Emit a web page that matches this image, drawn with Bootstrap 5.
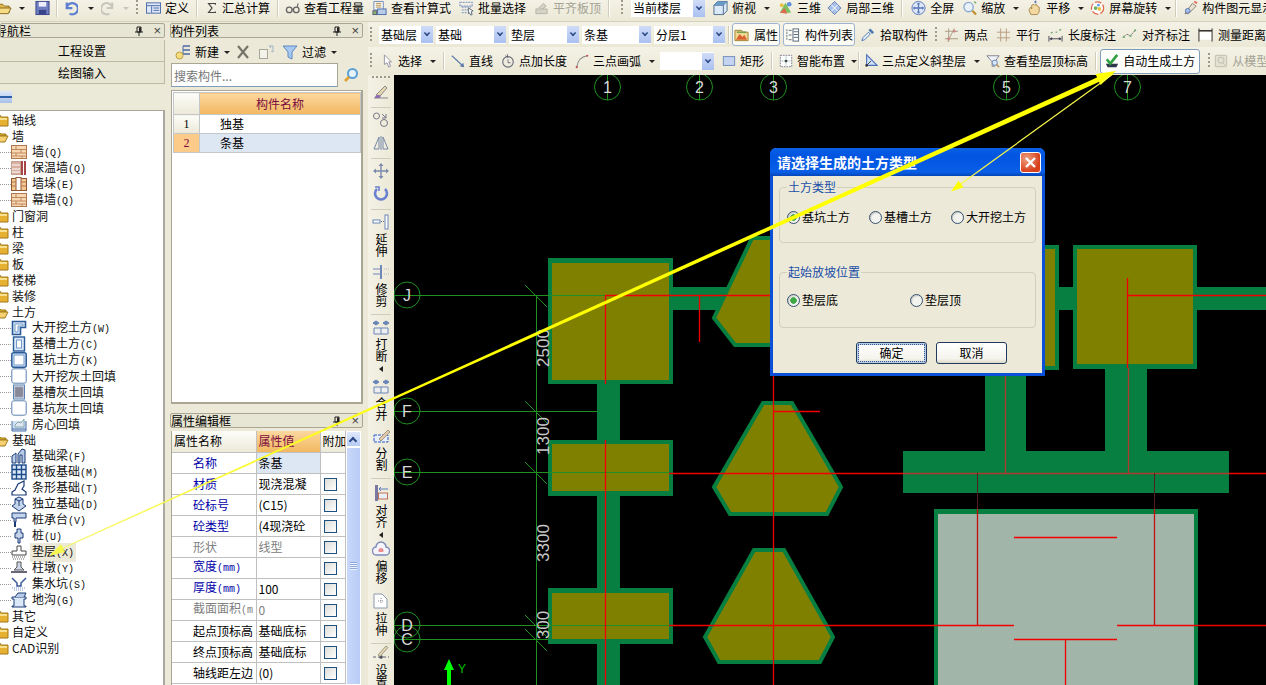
<!DOCTYPE html>
<html lang="zh-CN">
<head>
<meta charset="UTF-8">
<meta name="viewport" content="width=device-width, initial-scale=1.0">
<title>绘图输入</title>
<link href="https://cdn.jsdelivr.net/npm/bootstrap@5.3.2/dist/css/bootstrap.min.css" rel="stylesheet">
<style>
html,body{height:100%;margin:0;overflow:hidden}
body{background:#ece9d8;color:#000;font:12px/16px "Noto Sans CJK SC","Liberation Sans",sans-serif}
.app{width:1266px;height:685px;position:relative;overflow:hidden}
.ic{width:16px;height:16px;flex:none;display:block}
.lat{font:10px/16px "Liberation Mono",monospace;letter-spacing:0}
/* small nudges between toolbar items */
.n1{margin-left:-1px}.n2{margin-left:-2px}.n3{margin-left:-3px}.n4{margin-left:-4px}.n5{margin-left:-5px}.n7{margin-left:-7px}
.m2{margin-left:2px}.m3{margin-left:3px}.m5{margin-left:5px}
/* toolbars */
.tbar{flex:none;background:linear-gradient(#f4f2e6,#ebe8d6);white-space:nowrap;overflow:hidden}
.tb1{height:22px;gap:8px;border-bottom:1px solid #d5d2bf;padding-bottom:5px}
.tb1 .ic{width:15px}
.tb1 .ic.sig{width:12px}
.lft{display:flex;align-items:center;gap:7px;flex:none;margin-left:-3px}
.tb2{height:25px;gap:3px;padding-left:2px}
.tb2 .ic{width:15px}
.tb2 .ti{gap:5px}
.tb3{height:28px;gap:8px;padding-left:2px}
.tb3 .ic{width:14px}
.ti{display:flex;align-items:center;gap:4px;flex:none}
.off{color:#a3a294}
.vs{width:1px;height:18px;background:#cfccb8;flex:none;box-shadow:1px 0 0 #fff;margin-right:-1px;margin-left:-1px}
.vs.n4{margin-left:-4px}.vs.n7{margin-left:-7px}
.tb2 .vs{margin:0}
.grip{width:2px;height:16px;flex:none;background:repeating-linear-gradient(#9c9a88 0 2px,transparent 2px 4px)}
.car{width:0;height:0;border:3px solid transparent;border-top:3px solid #222;border-bottom:0;flex:none}
.car.dim{border-top-color:#c6c6bc}
.combo{display:flex;align-items:center;justify-content:space-between;background:#fff;height:18px;padding-left:2px;flex:none}
.c54{width:54px}.c69{width:69px}.c70{width:70px}.c71{width:71px}.c74{width:74px}
.cbtn{width:12px;height:17px;background:linear-gradient(#d0dcf8,#a9c0f0);display:flex;align-items:center;justify-content:center;flex:none}
.cbtn::after{content:"";width:6px;height:6px;border-right:2px solid #2d4a86;border-bottom:2px solid #2d4a86;transform:rotate(45deg) scale(.75);margin-top:-3px}
.push{height:23px;padding:0 1px;border:1px solid #9db3cf;border-radius:3px;background:#fbfaf3}
.hot{height:25px;padding:0 4px 0 4px;border:1px solid #7f9db9;border-radius:3px;background:#fdfdfa}
/* docks */
.navdock{width:165px;flex:none;display:flex;flex-direction:column;padding-top:1px;min-height:0}
.listdock{width:197px;margin-left:3px;flex:none;display:flex;flex-direction:column;padding-top:1px;min-height:0}
.dtitle{height:15px;flex:none;border:1px solid #a9a793;border-radius:2px;background:#e7e5d3;display:flex;align-items:center;justify-content:space-between;padding-right:3px;line-height:13px;overflow:hidden}
.listdock .dtitle{margin:0 2px}
.cut{margin-left:-6px}
.dbtns{display:flex;align-items:center;gap:9px;flex:none}
.dbtns .x{font:13px/12px "Liberation Sans",sans-serif;color:#444}
.navbtn{display:block;width:100%;height:22px;padding:0;font-size:12px;line-height:18px;border:1px solid #bdbba6;border-width:0 1px 1px 0;border-radius:0;background:#e8e6d5;color:#000;margin-bottom:0}
.navtop{height:2px;flex:none}
.treetool{height:27px;flex:none;background:#ebe9d8;display:flex;align-items:center;border-bottom:1px solid #aca899}
.minus{width:12px;height:12px;background:linear-gradient(#dfe8f8,#a8c0e8);display:flex;align-items:center}
.minus::after{content:"";width:100%;height:2px;background:#2f5fa8}
.tree{flex:1 1 0;background:#fff;border:1px solid #a9a9a0;border-width:0 2px 0 0;padding-top:1px;overflow:hidden}
.nd{height:16px;display:flex;align-items:center;white-space:nowrap;color:#111}
.nd.top{padding-left:0;gap:3px}
.nd.top .ic{margin-left:-7px}
.nd.sub{padding-left:11px;gap:5px;background:repeating-linear-gradient(90deg,#999 0 1px,transparent 1px 2px) 0 8px/12px 1px no-repeat}
.pick{background:#ece9d8;padding:0 2px;margin-left:-2px}
.listtool{height:25px;flex:none;display:flex;align-items:center;gap:5px;padding:3px 0 0 7px}
.srch{height:25px;flex:none;display:flex;gap:5px;padding-left:3px}
.srchbox{width:167px;height:24px;padding:0 2px;background:#fff;border:1px solid #a9a793;border-bottom-color:#7f9db9;border-radius:0;font-size:12px;color:#777;line-height:20px;box-shadow:none}
.srchbox::placeholder{color:#777}
.gridbox{height:314px;flex:none;margin:2px 2px 0 3px;background:#fff;border:1px solid #a9a793;border-width:1px 2px 2px 1px;padding:1px 0 0 1px;overflow:hidden}
.cg{border-collapse:collapse;width:188px;table-layout:fixed}
.cg td,.cg th{height:19px;padding:0;border:1px solid #c3c7c9;font-weight:400;line-height:16px}
.cg .rn{width:26px;background:linear-gradient(#fdfdf9,#ece9d8);text-align:center;font-family:"Liberation Serif",serif}
.cg th{height:22px;text-align:center;color:#7b0b3e}
.cg th.ora{background:linear-gradient(#fbd79f,#f2b860)}
.cg .nm{padding-left:20px}
.cg .act .rn{background:#fccb8a;color:#7b0b3e}
.cg .act .nm{background:#dde7f4}
.gapbar{height:9px;flex:none}
.propbox{flex:1 1 0;margin:3px 4px 0 3px;background:#fff;overflow:hidden;display:flex;border-left:1px solid #a9a793}
.pt{border-collapse:collapse;table-layout:fixed;width:173px;flex:none;align-self:flex-start}
.pt .c1{width:84px}.pt .c2{width:64px}.pt .c3{width:25px}
.pt td,.pt th{height:21px;padding:0;border:1px solid #c0c0c0;border-width:0 1px 1px 0;font-weight:400;white-space:nowrap;overflow:hidden;line-height:16px;vertical-align:middle}
.pt th{background:linear-gradient(#fdfdf9,#ece9d8);padding-left:2px}
.pt th.ora{background:linear-gradient(#fbd79f,#f2b860);color:#7b0b3e}
.pt .k{padding-left:21px}
.pt .b{color:#0000a8}
.pt .g{color:#808080}
.pt .v{padding-left:2px}
.pt .sel{background:#dde7f4}
.cbx{width:13px;height:13px;display:block;margin:2px 0 0 3px;border:1px solid #1c5180;background:linear-gradient(135deg,#dcdcd7,#fff)}
.sbar{width:15px;flex:none;background:#e7eefd;display:flex;flex-direction:column}
.sup{height:16px;background:linear-gradient(#e0e9fc,#b6cbf6);display:flex;align-items:center;justify-content:center;border:1px solid #fff}
.sup::after{content:"";width:6px;height:6px;border-left:2px solid #2d4a86;border-top:2px solid #2d4a86;transform:rotate(45deg);margin-top:4px}
.sthumb{flex:1;background:linear-gradient(90deg,#c9d8fa,#b9ccf6);border:1px solid #fff;display:flex;align-items:center;justify-content:center}
.sthumb::after{content:"";width:7px;height:8px;background:repeating-linear-gradient(#8fa9e0 0 1px,#eef3fe 1px 2px)}
/* left vertical bar */
.main{margin-left:3px;min-width:0;flex:1 1 0;display:flex;flex-direction:column}
.vbar{width:26px;flex:none;background:linear-gradient(90deg,#f4f2e6,#ebe8d6);display:flex;flex-direction:column;align-items:center;overflow:hidden}
.vbar .ic{width:18px}
.vgrip{width:18px;height:2px;flex:none;margin:1px 0 6px;background:repeating-linear-gradient(90deg,#9c9a88 0 2px,transparent 2px 4px)}
.vi{margin-bottom:7px}
.vtxt{writing-mode:vertical-rl;text-orientation:upright;height:24px;line-height:12px;font-size:12px;margin:3px 0 7px;flex:none}
.vtxt.more{margin-bottom:9px}
.vs2{width:20px;height:1px;background:#cfccb8;flex:none;margin-bottom:4px}
.vs2.wide{margin-bottom:6px}
.vs2.tight{margin-bottom:1px}
.vcar{width:0;height:0;border:3px solid transparent;border-right:4px solid #222;border-left:0;margin:-3px 0 3px;flex:none}
.vcar.long{margin-bottom:6px}
.cad{display:block;background:#000;width:872px;height:610px;flex:none}
/* dialog */
.dlg{position:absolute;left:770px;top:148px;width:275px;height:228px;background:#ece9d8;border:3px solid #0a50d8;border-top:0;border-radius:6px 6px 0 0}
.dlgcap{height:28px;margin:0 -3px;padding:0 4px 0 7px;background:linear-gradient(#0a60e6,#0054e0 30%,#0a5fe8 85%,#0546b8);border-radius:6px 6px 0 0;color:#fff;font-weight:700;display:flex;align-items:center;justify-content:space-between;font-size:14px}
.dlgx{width:21px;height:21px;border:1px solid #fff;border-radius:3px;background:radial-gradient(circle at 30% 30%,#f0a080,#d8401c 70%);display:flex;align-items:center;justify-content:center}
.dlgbody{padding:4px 6px 0}
.grp{margin:0;border:1px solid #d0d0bf;border-radius:4px;height:63px;padding:0 0 0 7px}
.grp+.grp{margin-top:22px}
.grp legend{float:none;width:auto;margin:0;padding:0 1px;font-size:12px;line-height:14px;color:#1a4ea8}
.rrow{display:flex;gap:19px;margin-top:15px}
.rrow.two{gap:72px;margin-top:13px}
.rd{display:flex;align-items:center;gap:2px;flex:none}
.dlgr{width:13px;height:13px;margin:0;border:1px solid #34506f;background-color:#f2f2ee;box-shadow:inset 1px 1px 1px #c8c8c0;flex:none}
.dlgr:checked{background-color:#f2f2ee;border-color:#34506f;background-image:radial-gradient(circle,#3fa94a 0 3px,transparent 3.5px)}
.dlgact{display:flex;justify-content:flex-end;gap:9px;margin-top:14px;padding-right:29px}
.dlgbtn{height:22px;width:71px;padding:0;font-size:12px;line-height:18px;border:1px solid #1f3a5c;border-radius:3px;background:linear-gradient(#fff,#f4f3ec 80%,#dcd8c8);color:#000}
.dlgbtn.def{outline:1px dotted #3a5a90;outline-offset:-3px;box-shadow:inset 0 0 0 2px #b8cdea}
.overlay{position:absolute;left:0;top:0;width:1266px;height:685px;pointer-events:none}
</style>
</head>
<body>

<!-- icon set -->
<svg class="d-none">
<symbol id="i-open" viewBox="0 0 16 16"><path d="M1 4h5l2 2h5v7H1z" fill="#e3b94c" stroke="#8a6a20"/><path d="M3 8h12l-3 6H1z" fill="#f6dc84" stroke="#8a6a20"/></symbol>
<symbol id="i-save" viewBox="0 0 16 16"><rect x="1" y="1" width="14" height="14" fill="#6f7fc0" stroke="#39438a"/><rect x="4" y="1.5" width="8" height="5" fill="#eef"/><rect x="4" y="10" width="8" height="5" fill="#39438a"/></symbol>
<symbol id="i-undo" viewBox="0 0 16 16"><path d="M4 2v6h6M4 8a6 6 0 1 1 3 6" fill="none" stroke="#5f7fd0" stroke-width="2.4"/></symbol>
<symbol id="i-redo" viewBox="0 0 16 16"><path d="M12 2v6H6M12 8a6 6 0 1 0-3 6" fill="none" stroke="#c6c6bc" stroke-width="2.2"/></symbol>
<symbol id="i-def" viewBox="0 0 16 16"><rect x=".5" y="2.5" width="15" height="11" fill="#dfe7f8" stroke="#4a6aa8"/><path d="M1 5.500h14M6 6v7M8 8h6M8 10.500h6" stroke="#4a6aa8"/></symbol>
<symbol id="i-sig" viewBox="0 0 16 16"><path d="M12.500 3.500V2h-9l4.500 6-4.500 6h9v-1.500" fill="none" stroke="#444" stroke-width="1.600"/></symbol>
<symbol id="i-glass" viewBox="0 0 16 16"><circle cx="4.500" cy="10" r="3" fill="none" stroke="#666" stroke-width="1.400"/><circle cx="12" cy="10" r="3" fill="none" stroke="#666" stroke-width="1.400"/><path d="M7.500 9.500h1.500M13 7l1-4" stroke="#666" stroke-width="1.200"/></symbol>
<symbol id="i-calc" viewBox="0 0 16 16"><path d="M2 1h10v9H2z" fill="#fff" stroke="#6a86b8"/><path d="M4 3h6M4 5h6M4 7h6" stroke="#b08a40"/><rect x="6" y="9" width="9" height="6" fill="#b8cbe8" stroke="#4a6aa8"/><rect x="1" y="11" width="4" height="4" fill="#8ab86a" stroke="#557"/></symbol>
<symbol id="i-batch" viewBox="0 0 16 16"><path d="M1 2h13v4H1zM3 7h10M3 10h7M3 13h5" fill="none" stroke="#8aa0c8" stroke-width="1.400" stroke-dasharray="2 1"/><path d="M10 8l5 3-2 1 1 3-1.500.5L11 13l-1 1z" fill="#fff" stroke="#567"/></symbol>
<symbol id="i-flush" viewBox="0 0 16 16"><path d="M2 14h12v-5H2zM5 8l5-5 3 3-5 4" fill="#d5d3c6" stroke="#b5b3a6"/></symbol>
<symbol id="i-cube" viewBox="0 0 16 16"><path d="M1 5l4-4h10v10l-4 4H1z" fill="#dce9f8" stroke="#4a6a8a"/><path d="M1 5h10v10M11 5l4-4" fill="none" stroke="#4a6a8a"/><path d="M5 1h10l-4 4H1z" fill="#6a9ac8"/></symbol>
<symbol id="i-3d" viewBox="0 0 16 16"><path d="M2 13l6-11 6 11z" fill="#7cc060"/><path d="M2 13l5-5 3 6z" fill="#e06a50"/><circle cx="12" cy="4" r="2.500" fill="#6090e0"/><circle cx="4" cy="5" r="2" fill="#e8c040"/></symbol>
<symbol id="i-l3d" viewBox="0 0 16 16"><path d="M8 1l7 7-7 7-7-7z" fill="#a8c0e8" stroke="#6480b0"/><path d="M4.500 4.500l7 7M11.500 4.500l-7 7" stroke="#fff"/></symbol>
<symbol id="i-full" viewBox="0 0 16 16"><circle cx="8" cy="8" r="7" fill="#dfe8f8" stroke="#5a78b8"/><path d="M8 3v10M3 8h10" stroke="#5a78b8" stroke-width="1.400"/><path d="M8 2l2 2H6zM8 14l2-2H6zM2 8l2-2v4zM14 8l-2-2v4z" fill="#5a78b8"/></symbol>
<symbol id="i-zoom" viewBox="0 0 16 16"><circle cx="7" cy="7" r="5" fill="#e8f0fa" stroke="#8aa8d0" stroke-width="1.400"/><path d="M11 11l4 4" stroke="#c09030" stroke-width="2.400"/><path d="M13 1l2 2" stroke="#7a7" stroke-width="1.500"/></symbol>
<symbol id="i-pan" viewBox="0 0 16 16"><path d="M4 15l-2-5 2-3 1 2V5l2-1 1 1 2-1 1 2 2 1v5l-2 3z" fill="#f0d8a0" stroke="#a88850"/><path d="M9 0v3M7.500 1.500h3" stroke="#5a78b8"/></symbol>
<symbol id="i-rot" viewBox="0 0 16 16"><circle cx="8" cy="8" r="6.500" fill="#fff" stroke="#e06a50" stroke-width="1.400" stroke-dasharray="7 2"/><circle cx="6" cy="8" r="2" fill="#70b060"/><circle cx="10" cy="9" r="2" fill="#e8c040"/><circle cx="9" cy="5" r="1.500" fill="#60a0e0"/></symbol>
<symbol id="i-disp" viewBox="0 0 16 16"><path d="M2 14L10 3l4 3-8 8z" fill="#e8e0d0" stroke="#8a8070"/><circle cx="5" cy="11" r="2.500" fill="#a8c0e8" stroke="#5a78b8"/><path d="M12 1l3 2" stroke="#e06a50" stroke-width="2"/></symbol>
<symbol id="i-prop" viewBox="0 0 16 16"><path d="M1 3h7l2 2h5v9H1z" fill="#f0d890" stroke="#a08030"/><path d="M2 13l4-6 3 3 2-2 3 5z" fill="#d86030"/><path d="M3 5h10" stroke="#6a9a50" stroke-width="1.500"/></symbol>
<symbol id="i-list" viewBox="0 0 16 16"><path d="M2 2v12" stroke="#567" stroke-dasharray="2 1" fill="none"/><path d="M4 3h3M4 8h3M4 13h3" stroke="#567" fill="none"/><rect x="8.500" y="1.500" width="6" height="13" fill="#fff" stroke="#567"/><path d="M9 4.500h5M9 7.500h5M9 10.500h5" stroke="#567"/></symbol>
<symbol id="i-drop" viewBox="0 0 16 16"><path d="M2 14l1-3 6-6 2 2-6 6z" fill="#e8f0fa" stroke="#4a78b0"/><path d="M9 3l2-2 4 4-2 2z" fill="#4a78b0"/></symbol>
<symbol id="i-2pt" viewBox="0 0 16 16"><path d="M1 4h14M1 12h14M5 1v14M11 1L4 15" stroke="#a89a80" fill="none"/><circle cx="5" cy="12" r="1.500" fill="#c88"/><circle cx="11" cy="4" r="1.500" fill="#c88"/></symbol>
<symbol id="i-par" viewBox="0 0 16 16"><path d="M1 5h14M1 11h14M5 1v14M11 1v14" stroke="#b89a80" fill="none"/></symbol>
<symbol id="i-len" viewBox="0 0 16 16"><path d="M1 9v6M15 9v6M2 12h12M2 12l2-1v2zM14 12l-2-1v2z" stroke="#445" fill="#445"/><path d="M3 6l2-1M8 5h2M12 3l2-1" stroke="#7a7" stroke-width="1.400"/></symbol>
<symbol id="i-ali" viewBox="0 0 16 16"><path d="M1 11l4-4 4 2 5-6" fill="none" stroke="#6a6a6a" stroke-dasharray="2 1"/><circle cx="2" cy="10" r="1.200" fill="#7a7"/><circle cx="9" cy="9" r="1.200" fill="#7a7"/><circle cx="14" cy="3" r="1.200" fill="#7a7"/></symbol>
<symbol id="i-mea" viewBox="0 0 16 16"><path d="M1 1v14M15 1v14" stroke="#222"/><path d="M1 3.500h14" stroke="#222" stroke-width="1.500"/><rect x="2" y="5" width="12" height="8" fill="#fff"/></symbol>
<symbol id="i-ptr" viewBox="0 0 16 16"><path d="M5 1v11l3-2 2 5 2-1-2-5h3z" fill="#fff" stroke="#8a8a9a"/></symbol>
<symbol id="i-line" viewBox="0 0 16 16"><path d="M1 2l13 12" stroke="#5a78a8" stroke-width="1.200"/><path d="M15 15l-5-1 4-4z" fill="#5a78a8"/></symbol>
<symbol id="i-ptl" viewBox="0 0 16 16"><circle cx="8" cy="9" r="6" fill="none" stroke="#667" stroke-width="1.200"/><path d="M5 2l3 2-1-4M8 6v4h3" fill="none" stroke="#667"/></symbol>
<symbol id="i-arc" viewBox="0 0 16 16"><path d="M2 15C3 8 7 3 14 2" fill="none" stroke="#888" stroke-width="1.200"/><circle cx="14" cy="2" r="1.200" fill="#c05050"/><circle cx="2" cy="15" r="1.200" fill="#c05050"/></symbol>
<symbol id="i-rect" viewBox="0 0 16 16"><rect x="1.500" y="3" width="13" height="10" fill="#c4d4f0" stroke="#6a86b8"/></symbol>
<symbol id="i-smart" viewBox="0 0 16 16"><rect x="1.500" y="1.500" width="13" height="13" fill="#fff" stroke="#778" stroke-dasharray="2 1"/><path d="M8 3v10M3 8h10" stroke="#7a9" stroke-dasharray="2 1"/><circle cx="8" cy="8" r="1.500" fill="#445"/></symbol>
<symbol id="i-slope" viewBox="0 0 16 16"><path d="M3 1v12h12z" fill="#cfe0f8" stroke="#4a70b8" stroke-width="1.200"/><path d="M3 13l5-5" stroke="#333"/><circle cx="3" cy="13" r="1.500" fill="#333"/></symbol>
<symbol id="i-look" viewBox="0 0 16 16"><path d="M1 2h14l-5 7v5H7V9z" fill="#eef2f8" stroke="#778"/><circle cx="10" cy="10" r="3" fill="#d8e8f8" stroke="#5a78a8"/><path d="M12 12l3 3" stroke="#a88850" stroke-width="1.600"/></symbol>
<symbol id="i-auto" viewBox="0 0 16 16"><path d="M1 11h14l-2 4H3z" fill="#30364a"/><path d="M2 6l4 5 8-10" fill="none" stroke="#30a040" stroke-width="3"/></symbol>
<symbol id="i-from" viewBox="0 0 16 16"><rect x="1.500" y="1.500" width="13" height="13" rx="1" fill="#e3e1d2" stroke="#bdbba9"/><circle cx="8" cy="7" r="3.500" fill="none" stroke="#bdbba9"/><path d="M10 10l3 3" stroke="#bdbba9"/></symbol>
<symbol id="i-new" viewBox="0 0 16 16"><path d="M8 2h7M8 6h7M8 10h7" stroke="#4a6aa8" stroke-width="1.400"/><path d="M8 2v8" stroke="#4a6aa8"/><circle cx="4.500" cy="11.500" r="3.500" fill="#f4dc80" stroke="#c0a040"/></symbol>
<symbol id="i-del" viewBox="0 0 16 16"><path d="M3 2l10 12M13 2L3 14" stroke="#75746a" stroke-width="2.200"/></symbol>
<symbol id="i-copy" viewBox="0 0 16 16"><rect x="1.500" y="5.500" width="8" height="9" fill="#f4f3ea" stroke="#a8a89a"/><path d="M11 2h4v6M11 2l2 2M15 8l-2-1" fill="none" stroke="#a0b4c8"/></symbol>
<symbol id="i-fun" viewBox="0 0 16 16"><path d="M1 2h14l-5 6v7l-4-2V8z" fill="#a8c8f0" stroke="#5a88c0"/></symbol>
<symbol id="i-mag" viewBox="0 0 16 16"><circle cx="9.500" cy="6.500" r="4.500" fill="#e8f4fc" stroke="#5aa0d8" stroke-width="2"/><path d="M6 10l-4 4" stroke="#e0a030" stroke-width="2.600"/></symbol>
<symbol id="i-pin" viewBox="0 0 10 10"><path d="M3 1h4v5H3zM1 6h8M5 6v4" fill="none" stroke="#222"/><path d="M5 1.500h2v4.500H5z" fill="#222"/></symbol>
<symbol id="f-c" viewBox="0 0 16 16"><path d="M1 3h6l1 2h7v9H1z" fill="#e8b030" stroke="#a07818"/><path d="M2 6h12v2H2z" fill="#f8e090"/></symbol>
<symbol id="f-o" viewBox="0 0 16 16"><path d="M1 4h5l2 2h5v2H1z" fill="#d8a830" stroke="#a07818"/><path d="M3 8h12l-3 6H1z" fill="#f4d070" stroke="#a07818"/></symbol>
<symbol id="t-brick" viewBox="0 0 16 16"><rect x=".5" y="1.500" width="15" height="13" fill="#f8d8b0" stroke="#b07850"/><path d="M1 5.500h14M1 9h14M1 12h14M5 2v3.500M10 5.500V9M5 9v3M11 12v2.500" stroke="#c08860"/></symbol>
<symbol id="t-ins" viewBox="0 0 16 16"><rect x=".5" y="1.500" width="9" height="13" fill="#d8b0a0" stroke="#c8a090"/><path d="M1 5h8M1 9h8M1 12h8" stroke="#fff"/><path d="M11 1v14M14 1v14" stroke="#901818" stroke-width="1.600"/></symbol>
<symbol id="t-pier" viewBox="0 0 16 16"><rect x=".5" y="2.500" width="15" height="12" fill="#f4c890" stroke="#905830"/><rect x="5" y="1.500" width="5" height="13" fill="#fff" stroke="#905830"/><path d="M1 6h4M1 10h4M10 6h5M10 10h5" stroke="#b07850"/></symbol>
<symbol id="t-ex" viewBox="0 0 16 16"><path d="M1.500 1.500h13v6h-5v7h-8z" fill="#dbe8f8" stroke="#2a5a98" stroke-width="1.600"/><path d="M4 4h8v2H7v6H4z" fill="#fff" stroke="#7098c8"/></symbol>
<symbol id="t-tr" viewBox="0 0 16 16"><rect x="2.500" y="1" width="11" height="14" fill="#dbe8f8" stroke="#2a5a98" stroke-width="1.400"/><rect x="5.500" y="4" width="5" height="8" fill="#fff" stroke="#7098c8"/></symbol>
<symbol id="t-pit" viewBox="0 0 16 16"><rect x=".8" y=".8" width="14.400" height="14.400" rx="2" fill="#dbe8f8" stroke="#2a5a98" stroke-width="1.500"/><rect x="3" y="3" width="10" height="10" fill="#fff" stroke="#7098c8"/></symbol>
<symbol id="t-fill" viewBox="0 0 16 16"><rect x=".8" y=".8" width="14.400" height="14.400" rx="2" fill="#fff" stroke="#5a80b0"/></symbol>
<symbol id="t-trf" viewBox="0 0 16 16"><rect x="2.500" y="1" width="11" height="14" fill="#dbe8f8" stroke="#5a80b0"/><rect x="4" y="3" width="8" height="10" fill="#889" stroke="#99a"/></symbol>
<symbol id="t-room" viewBox="0 0 16 16"><path d="M1 5v10h14V5M1 13h14" fill="#cfe0f4" stroke="#4a70a8"/><path d="M4 9l3-3 3 1 3-4v8H4z" fill="#e0e8f4" stroke="#8aa"/></symbol>
<symbol id="t-bm" viewBox="0 0 16 16"><path d="M1 15V8l4-3v10zM7 15V6l4-5 3 1v13h-3V7H9v8z" fill="#b8cce8" stroke="#1a3a78"/></symbol>
<symbol id="t-raft" viewBox="0 0 16 16"><rect x="1" y="1" width="14" height="14" fill="#dbe8f8" stroke="#1a4a88" stroke-width="1.400"/><path d="M1 5.500h14M1 10.500h14M5.500 1v14M10.500 1v14" stroke="#1a4a88" stroke-width="1.400"/></symbol>
<symbol id="t-strip" viewBox="0 0 16 16"><path d="M1 15v-3l3-2 3-6 6-3v5l-2 3 4 3v3z" fill="#fff" stroke="#1a3a78" stroke-width="1.200"/></symbol>
<symbol id="t-iso" viewBox="0 0 16 16"><path d="M1 10l7 5 7-5-3-2V3L8 1 4 3v5z" fill="#c4d4ea" stroke="#1a3a78"/><path d="M4 3l4 2 4-2M8 5v5" fill="none" stroke="#1a3a78"/></symbol>
<symbol id="t-cap" viewBox="0 0 16 16"><path d="M1 1h14v5H5v4H3V6H1z" fill="#c4d4ea" stroke="#1a3a78"/><path d="M4 10v5" stroke="#1a3a78" stroke-width="2"/></symbol>
<symbol id="t-pile" viewBox="0 0 16 16"><path d="M6 1h4v4h2v5H9v5H7v-5H4V5h2z" fill="#c4d4ea" stroke="#1a3a78"/></symbol>
<symbol id="t-cush" viewBox="0 0 16 16"><path d="M6 2h4v5h5v4H1V7h5z" fill="#fff" stroke="#444"/><path d="M1 13h14M2 15h12" stroke="#666" stroke-dasharray="1 1"/></symbol>
<symbol id="t-pad" viewBox="0 0 16 16"><path d="M6 2h4v5l3 3H3l3-3z" fill="#cfd8e8" stroke="#555"/><path d="M0 12h16" stroke="#667" stroke-width="2"/></symbol>
<symbol id="t-sump" viewBox="0 0 16 16"><path d="M1 2l5 5v3h4V7l5-5" fill="none" stroke="#3a5a98" stroke-width="1.500"/><path d="M1 12h14M3 14h10" stroke="#7a9ac8" stroke-dasharray="1 1"/></symbol>
<symbol id="t-tren" viewBox="0 0 16 16"><path d="M1 5h14v2h-2v7h2v1H1v-1h2V7H1z" fill="#dbe8f8" stroke="#1a3a78"/><path d="M4 5l3-4h8l-2 4" fill="#b8cce8" stroke="#1a3a78"/></symbol>
<symbol id="v-brush" viewBox="0 0 18 16"><path d="M2 14h14" stroke="#888"/><path d="M4 11l9-9 2 2-7 8z" fill="#e8d8b0" stroke="#888"/><path d="M3 14c0-3 2-3 4-3l2 2c-1 1-3 1-6 1z" fill="#8a6ab0"/></symbol>
<symbol id="v-off" viewBox="0 0 18 16"><circle cx="4.500" cy="4" r="3" fill="none" stroke="#778"/><circle cx="12" cy="11" r="3.500" fill="none" stroke="#778"/><path d="M10 2l4 4M14 2v4h-4" fill="none" stroke="#778"/></symbol>
<symbol id="v-mir" viewBox="0 0 18 16"><path d="M9 1v14M7 2L2 14h5zM11 2l5 12h-5z" fill="none" stroke="#7486a8"/></symbol>
<symbol id="v-mov" viewBox="0 0 18 16"><path d="M9 1v14M2 8h14" stroke="#7a8aa8" stroke-width="1.400"/><path d="M9 0l2.500 3h-5zM9 16l2.500-3h-5zM1 8l3-2.500v5zM17 8l-3-2.500v5z" fill="#7a8aa8"/></symbol>
<symbol id="v-rot" viewBox="0 0 18 16"><path d="M5 3a6 6 0 1 0 8 0" fill="none" stroke="#6a80d0" stroke-width="2.600"/><path d="M3 1h4v4" fill="none" stroke="#6a80d0" stroke-width="1.600"/></symbol>
<symbol id="v-ext" viewBox="0 0 18 16"><rect x="13" y="1" width="3" height="14" fill="#fff" stroke="#6a86b8"/><rect x="1" y="6" width="7" height="3" fill="#fff" stroke="#6a86b8"/><path d="M9 7.500h3" stroke="#667" stroke-dasharray="1 1"/></symbol>
<symbol id="v-trim" viewBox="0 0 18 16"><path d="M1 5h9M1 10h9" stroke="#7088b8"/><path d="M9 1v14" stroke="#7088b8" stroke-width="2"/><path d="M12 5h5M12 10h5" stroke="#a8b8c8" stroke-dasharray="1 1"/></symbol>
<symbol id="v-brk" viewBox="0 0 18 16"><path d="M1 4h6M11 4h6M1 4l3-2v4zM7 4L4 2v4zM11 4l3-2v4zM17 4l-3-2v4z" stroke="#6a86b8" fill="#6a86b8"/><path d="M2 9h14v6H2zM9 9v6" fill="#eee" stroke="#6a86b8"/></symbol>
<symbol id="v-spl" viewBox="0 0 18 16"><path d="M2 7h14v7H2z" fill="#e8eefa" stroke="#2a5ac8" stroke-dasharray="3 1"/><path d="M7 11l9-9 2 2-9 9z" fill="#e8c8a8" stroke="#998"/></symbol>
<symbol id="v-ali" viewBox="0 0 18 16"><path d="M3 0h3v16H3z" fill="#7878a0"/><path d="M7 4h9M9 2L7 4l2 2" fill="none" stroke="#5a78b8"/><rect x="6.500" y="8" width="9" height="6" fill="#e8eefa" stroke="#c07050"/></symbol>
<symbol id="v-ofs" viewBox="0 0 18 16"><path d="M5 14a4 4 0 0 1-1-8 5 5 0 0 1 10 0 4 4 0 0 1-1 8z" fill="#f4f4fa" stroke="#7a8ab8" stroke-width="1.400"/><path d="M7 11a2 2 0 0 1 0-3 2.500 2.500 0 0 1 4 0 2 2 0 0 1 0 3z" fill="#e89090"/></symbol>
<symbol id="v-str" viewBox="0 0 18 16"><path d="M2 1h8l5 5v9H2z" fill="#fff" stroke="#8a98b0"/><path d="M6 8h6M9 5v6" stroke="#889" stroke-dasharray="1 1"/></symbol>
<symbol id="v-set" viewBox="0 0 18 16"><path d="M1 12h16" stroke="#667" stroke-dasharray="3 2"/><circle cx="9" cy="12" r="1.800" fill="#445"/><path d="M6 10l8-9 2 1.500-8 9z" fill="#e8d8b0" stroke="#998"/></symbol>
</svg>

<div class="app d-flex flex-column">

  <!-- standard toolbar -->
  <div class="tbar tb1 d-flex align-items-center">
    <div class="lft">
      <svg class="ic"><use href="#i-open"/></svg><i class="car"></i>
      <svg class="ic m3"><use href="#i-save"/></svg><i class="vs"></i>
      <svg class="ic"><use href="#i-undo"/></svg><i class="car m3"></i>
      <svg class="ic"><use href="#i-redo"/></svg><i class="car dim"></i><i class="grip"></i>
    </div>
    <span class="ti"><svg class="ic"><use href="#i-def"/></svg>定义</span><i class="vs"></i>
    <span class="ti m2"><svg class="ic sig"><use href="#i-sig"/></svg>汇总计算</span><i class="vs"></i>
    <span class="ti"><svg class="ic"><use href="#i-glass"/></svg>查看工程量</span>
    <span class="ti"><svg class="ic"><use href="#i-calc"/></svg>查看计算式</span>
    <span class="ti"><svg class="ic"><use href="#i-batch"/></svg>批量选择</span>
    <span class="ti off"><svg class="ic"><use href="#i-flush"/></svg>平齐板顶</span><i class="vs"></i>
    <i class="grip m5"></i>
    <span class="combo c74">当前楼层<i class="cbtn"></i></span>
    <span class="ti"><svg class="ic"><use href="#i-cube"/></svg>俯视</span><i class="car"></i>
    <span class="ti"><svg class="ic"><use href="#i-3d"/></svg>三维</span>
    <span class="ti n2"><svg class="ic"><use href="#i-l3d"/></svg>局部三维</span><i class="vs"></i>
    <span class="ti m2"><svg class="ic"><use href="#i-full"/></svg>全屏</span>
    <span class="ti"><svg class="ic"><use href="#i-zoom"/></svg>缩放</span><i class="car"></i>
    <span class="ti"><svg class="ic"><use href="#i-pan"/></svg>平移</span><i class="car"></i>
    <span class="ti n2"><svg class="ic"><use href="#i-rot"/></svg>屏幕旋转</span><i class="car"></i><i class="vs n4"></i>
    <span class="ti"><svg class="ic"><use href="#i-disp"/></svg>构件图元显示</span>
  </div>

  <div class="d-flex flex-grow-1 overflow-hidden">

    <!-- navigation dock -->
    <aside class="navdock">
      <div class="dtitle"><span class="cut">导航栏</span><span class="dbtns"><svg width="10" height="10"><use href="#i-pin"/></svg><span class="x">×</span></span></div>
      <div class="navtop"></div>
      <button class="btn navbtn" type="button">工程设置</button>
      <button class="btn navbtn" type="button">绘图输入</button>
      <div class="treetool"><span class="minus"></span></div>
      <div class="tree">
        <div class="nd top"><svg class="ic"><use href="#f-c"/></svg>轴线</div>
        <div class="nd top"><svg class="ic"><use href="#f-o"/></svg>墙</div>
        <div class="nd sub"><svg class="ic"><use href="#t-brick"/></svg><span>墙<span class="lat">(Q)</span></span></div>
        <div class="nd sub"><svg class="ic"><use href="#t-ins"/></svg><span>保温墙<span class="lat">(Q)</span></span></div>
        <div class="nd sub"><svg class="ic"><use href="#t-pier"/></svg><span>墙垛<span class="lat">(E)</span></span></div>
        <div class="nd sub"><svg class="ic"><use href="#t-brick"/></svg><span>幕墙<span class="lat">(Q)</span></span></div>
        <div class="nd top"><svg class="ic"><use href="#f-c"/></svg>门窗洞</div>
        <div class="nd top"><svg class="ic"><use href="#f-c"/></svg>柱</div>
        <div class="nd top"><svg class="ic"><use href="#f-c"/></svg>梁</div>
        <div class="nd top"><svg class="ic"><use href="#f-c"/></svg>板</div>
        <div class="nd top"><svg class="ic"><use href="#f-c"/></svg>楼梯</div>
        <div class="nd top"><svg class="ic"><use href="#f-c"/></svg>装修</div>
        <div class="nd top"><svg class="ic"><use href="#f-o"/></svg>土方</div>
        <div class="nd sub"><svg class="ic"><use href="#t-ex"/></svg><span>大开挖土方<span class="lat">(W)</span></span></div>
        <div class="nd sub"><svg class="ic"><use href="#t-tr"/></svg><span>基槽土方<span class="lat">(C)</span></span></div>
        <div class="nd sub"><svg class="ic"><use href="#t-pit"/></svg><span>基坑土方<span class="lat">(K)</span></span></div>
        <div class="nd sub"><svg class="ic"><use href="#t-fill"/></svg><span>大开挖灰土回填</span></div>
        <div class="nd sub"><svg class="ic"><use href="#t-trf"/></svg><span>基槽灰土回填</span></div>
        <div class="nd sub"><svg class="ic"><use href="#t-fill"/></svg><span>基坑灰土回填</span></div>
        <div class="nd sub"><svg class="ic"><use href="#t-room"/></svg><span>房心回填</span></div>
        <div class="nd top"><svg class="ic"><use href="#f-o"/></svg>基础</div>
        <div class="nd sub"><svg class="ic"><use href="#t-bm"/></svg><span>基础梁<span class="lat">(F)</span></span></div>
        <div class="nd sub"><svg class="ic"><use href="#t-raft"/></svg><span>筏板基础<span class="lat">(M)</span></span></div>
        <div class="nd sub"><svg class="ic"><use href="#t-strip"/></svg><span>条形基础<span class="lat">(T)</span></span></div>
        <div class="nd sub"><svg class="ic"><use href="#t-iso"/></svg><span>独立基础<span class="lat">(D)</span></span></div>
        <div class="nd sub"><svg class="ic"><use href="#t-cap"/></svg><span>桩承台<span class="lat">(V)</span></span></div>
        <div class="nd sub"><svg class="ic"><use href="#t-pile"/></svg><span>桩<span class="lat">(U)</span></span></div>
        <div class="nd sub"><svg class="ic"><use href="#t-cush"/></svg><span class="pick">垫层<span class="lat">(X)</span></span></div>
        <div class="nd sub"><svg class="ic"><use href="#t-pad"/></svg><span>柱墩<span class="lat">(Y)</span></span></div>
        <div class="nd sub"><svg class="ic"><use href="#t-sump"/></svg><span>集水坑<span class="lat">(S)</span></span></div>
        <div class="nd sub"><svg class="ic"><use href="#t-tren"/></svg><span>地沟<span class="lat">(G)</span></span></div>
        <div class="nd top"><svg class="ic"><use href="#f-c"/></svg>其它</div>
        <div class="nd top"><svg class="ic"><use href="#f-c"/></svg>自定义</div>
        <div class="nd top"><svg class="ic"><use href="#f-c"/></svg>CAD识别</div>
      </div>
    </aside>

    <!-- component list + property docks -->
    <aside class="listdock">
      <div class="dtitle"><span>构件列表</span><span class="dbtns"><svg width="10" height="10"><use href="#i-pin"/></svg><span class="x">×</span></span></div>
      <div class="listtool">
        <span class="ti gap-0"><svg class="ic me-1"><use href="#i-new"/></svg>新建</span><i class="car"></i>
        <svg class="ic"><use href="#i-del"/></svg>
        <svg class="ic m2"><use href="#i-copy"/></svg>
        <span class="ti m3"><svg class="ic"><use href="#i-fun"/></svg>过滤</span><i class="car"></i>
      </div>
      <div class="srch">
        <input class="form-control srchbox" type="text" placeholder="搜索构件...">
        <svg class="ic mt-1"><use href="#i-mag"/></svg>
      </div>
      <div class="gridbox">
        <table class="cg">
          <tr><th class="rn"></th><th class="ora">构件名称</th></tr>
          <tr><td class="rn">1</td><td class="nm">独基</td></tr>
          <tr class="act"><td class="rn">2</td><td class="nm">条基</td></tr>
        </table>
      </div>
      <div class="gapbar"></div>
      <div class="dtitle"><span>属性编辑框</span><span class="dbtns"><svg width="10" height="10"><use href="#i-pin"/></svg><span class="x">×</span></span></div>
      <div class="propbox">
        <table class="pt">
          <colgroup><col class="c1"><col class="c2"><col class="c3"></colgroup>
          <tr><th>属性名称</th><th class="ora">属性值</th><th>附加</th></tr>
          <tr><td class="k b">名称</td><td class="v sel">条基</td><td></td></tr>
          <tr><td class="k b">材质</td><td class="v">现浇混凝</td><td><i class="cbx"></i></td></tr>
          <tr><td class="k b">砼标号</td><td class="v">(C15)</td><td><i class="cbx"></i></td></tr>
          <tr><td class="k b">砼类型</td><td class="v">(4现浇砼</td><td><i class="cbx"></i></td></tr>
          <tr><td class="k g">形状</td><td class="v g">线型</td><td><i class="cbx"></i></td></tr>
          <tr><td class="k b">宽度<span class="lat">(mm)</span></td><td class="v"></td><td><i class="cbx"></i></td></tr>
          <tr><td class="k b">厚度<span class="lat">(mm)</span></td><td class="v">100</td><td><i class="cbx"></i></td></tr>
          <tr><td class="k g">截面面积<span class="lat">(m</span></td><td class="v g">0</td><td><i class="cbx"></i></td></tr>
          <tr><td class="k">起点顶标高</td><td class="v">基础底标</td><td><i class="cbx"></i></td></tr>
          <tr><td class="k">终点顶标高</td><td class="v">基础底标</td><td><i class="cbx"></i></td></tr>
          <tr><td class="k">轴线距左边</td><td class="v">(0)</td><td><i class="cbx"></i></td></tr>
        </table>
        <div class="sbar"><div class="sup"></div><div class="sthumb"></div></div>
      </div>
    </aside>

    <div class="main">
      <!-- layer toolbar -->
      <div class="tbar tb2 d-flex align-items-center">
        <i class="grip me-1"></i>
        <span class="combo c54">基础层<i class="cbtn"></i></span>
        <span class="combo c70">基础<i class="cbtn"></i></span>
        <span class="combo c70">垫层<i class="cbtn"></i></span>
        <span class="combo c69">条基<i class="cbtn"></i></span>
        <span class="combo c71">分层1<i class="cbtn"></i></span>
        <i class="vs"></i>
        <span class="ti push"><svg class="ic"><use href="#i-prop"/></svg>属性</span>
        <span class="ti push"><svg class="ic"><use href="#i-list"/></svg>构件列表</span>
        <span class="ti m2"><svg class="ic"><use href="#i-drop"/></svg>拾取构件</span>
        <i class="grip mx-1"></i>
        <span class="ti"><svg class="ic"><use href="#i-2pt"/></svg>两点</span>
        <span class="ti m5"><svg class="ic"><use href="#i-par"/></svg>平行</span>
        <span class="ti m5"><svg class="ic"><use href="#i-len"/></svg>长度标注</span>
        <span class="ti m3"><svg class="ic"><use href="#i-ali"/></svg>对齐标注</span>
        <span class="ti m5"><svg class="ic"><use href="#i-mea"/></svg>测量距离</span>
      </div>
      <!-- draw toolbar -->
      <div class="tbar tb3 d-flex align-items-center">
        <i class="grip"></i>
        <span class="ti"><svg class="ic"><use href="#i-ptr"/></svg>选择</span><i class="car"></i><i class="vs"></i>
        <span class="ti"><svg class="ic"><use href="#i-line"/></svg>直线</span>
        <span class="ti"><svg class="ic"><use href="#i-ptl"/></svg>点加长度</span>
        <span class="ti"><svg class="ic"><use href="#i-arc"/></svg>三点画弧</span><i class="car"></i>
        <span class="combo c54 n3"><i></i><i class="cbtn"></i></span>
        <span class="ti"><svg class="ic"><use href="#i-rect"/></svg>矩形</span><i class="vs"></i>
        <span class="ti"><svg class="ic"><use href="#i-smart"/></svg>智能布置</span><i class="car n2"></i><i class="vs n7"></i>
        <span class="ti n2"><svg class="ic"><use href="#i-slope"/></svg>三点定义斜垫层</span><i class="car"></i>
        <span class="ti n2"><svg class="ic"><use href="#i-look"/></svg>查看垫层顶标高</span><i class="vs"></i>
        <span class="ti hot n3"><svg class="ic"><use href="#i-auto"/></svg>自动生成土方</span><i class="grip"></i>
        <span class="ti off n4"><svg class="ic"><use href="#i-from"/></svg>从模型</span>
      </div>

      <div class="d-flex flex-grow-1 overflow-hidden">
        <!-- modify toolbar -->
        <div class="vbar">
          <i class="vgrip"></i>
          <svg class="ic vi"><use href="#v-brush"/></svg><i class="vs2"></i>
          <svg class="ic vi"><use href="#v-off"/></svg>
          <svg class="ic vi"><use href="#v-mir"/></svg><i class="vs2"></i>
          <svg class="ic vi"><use href="#v-mov"/></svg>
          <svg class="ic vi"><use href="#v-rot"/></svg><i class="vs2"></i>
          <svg class="ic"><use href="#v-ext"/></svg><span class="vtxt">延伸</span>
          <svg class="ic"><use href="#v-trim"/></svg><span class="vtxt">修剪</span><i class="vs2"></i>
          <svg class="ic"><use href="#v-brk"/></svg><span class="vtxt">打断</span><i class="vcar long"></i>
          <svg class="ic"><use href="#v-brk"/></svg><span class="vtxt">合并</span>
          <svg class="ic"><use href="#v-spl"/></svg><span class="vtxt">分割</span><i class="vs2 wide"></i>
          <svg class="ic"><use href="#v-ali"/></svg><span class="vtxt">对齐</span><i class="vcar"></i>
          <svg class="ic"><use href="#v-ofs"/></svg><span class="vtxt more">偏移</span>
          <svg class="ic"><use href="#v-str"/></svg><span class="vtxt">拉伸</span><i class="vs2 tight"></i>
          <svg class="ic"><use href="#v-set"/></svg><span class="vtxt">设置</span>
        </div>

        <!-- drawing canvas, page coordinates -->
        <svg class="cad" viewBox="394 75 872 610" font-family="Liberation Sans, sans-serif">
          <g fill="#067f40">
            <rect x="597" y="384" width="23" height="301"/>
            <rect x="673" y="287" width="60" height="23"/>
            <rect x="1059" y="287" width="14" height="23"/>
            <rect x="1197" y="287" width="69" height="23"/>
            <rect x="985" y="368" width="41" height="84"/>
            <rect x="1105" y="368" width="42" height="84"/>
            <rect x="903" y="451" width="326" height="42"/>
            <rect x="548" y="258" width="125" height="126"/>
            <rect x="548" y="440" width="125" height="56"/>
            <rect x="548" y="588" width="125" height="56"/>
            <rect x="935" y="245" width="124" height="125"/>
            <rect x="1073" y="245" width="124" height="124"/>
            <rect x="934" y="509" width="264" height="180"/>
          </g>
          <g fill="#808000">
            <rect x="552" y="263" width="117" height="117"/>
            <rect x="552" y="444" width="117" height="47"/>
            <rect x="552" y="593" width="117" height="46"/>
            <rect x="939" y="249" width="116" height="117"/>
            <rect x="1077" y="249" width="116" height="115"/>
          </g>
          <rect x="938" y="514" width="256" height="175" fill="#a2b5a9"/>
          <g fill="#808000" stroke="#067f40" stroke-width="4" stroke-linejoin="miter">
            <polygon points="752,238 790,238 841,318 820,345 735,345 714,318"/>
            <polygon points="763,403 792,403 841,487 827,514 730,514 714,487"/>
            <polygon points="754,550 784,550 833,637 820,662 719,662 705,637"/>
          </g>

          <!-- axis lines -->
          <g stroke="#1f8f1f" fill="none">
            <path d="M394 295.500H605M394 411.500H597M394 472.500H669M394 625.500H669M394 639.500H548M536.500 295V685"/>
            <path d="M525 285l22 22M525 401l22 22M525 462l22 22M525 615l22 22M525 629l22 22"/>
            <path d="M607.500 74v26M699.500 74v26M773.500 74v26M1006.500 74v26M1127.500 74v26"/>
            <circle cx="607.500" cy="87" r="13"/><circle cx="699.500" cy="87" r="13"/><circle cx="773.500" cy="87" r="13"/><circle cx="1006.500" cy="87" r="13"/><circle cx="1127.500" cy="87" r="13"/>
            <circle cx="407" cy="295" r="13"/><circle cx="407" cy="411" r="13"/><circle cx="407" cy="472" r="13"/><circle cx="407" cy="625" r="13"/><circle cx="407" cy="639" r="13"/>
          </g>
          <g fill="#d8d8d8" font-size="16" text-anchor="middle">
            <text x="607.500" y="93">1</text><text x="699.500" y="93">2</text><text x="773.500" y="93">3</text><text x="1006.500" y="93">5</text><text x="1127.500" y="93">7</text>
            <text x="407" y="301">J</text><text x="407" y="417">F</text><text x="407" y="478">E</text><text x="407" y="631">D</text><text x="407" y="645">C</text>
          </g>
          <g fill="#c8c8c8" font-size="17" text-anchor="middle">
            <text transform="translate(549 348) rotate(-90)">2500</text>
            <text transform="translate(549 436) rotate(-90)">1300</text>
            <text transform="translate(549 543) rotate(-90)">3300</text>
            <text transform="translate(549 625) rotate(-90)">300</text>
          </g>

          <!-- wall centre lines -->
          <g stroke="#f00000" fill="none" stroke-width="1.300">
            <path d="M605 295.500H770M605.500 295V384M605.500 440V685M699.500 295V342"/>
            <path d="M773.500 295V685M773.500 411.500H820"/>
            <path d="M669 473.500H903M1229 473.500H1266M669 625.500H1014M1117 625.500H1266"/>
            <path d="M1127 295.500H1266M1127.500 278V368"/>
            <path d="M1014 537.500H1117M1014 639.500H1117M1065.500 639V685"/>
            <path d="M977.500 509V625M1154.500 509V625" stroke="#c01010"/>
          </g>
          <path d="M903 473.500H1229M1005.500 375V473M1128.500 368V473" stroke="#b03a30" fill="none" stroke-width="1.300"/>
          <path d="M977.500 473V509M1154.500 473V509" stroke="#502020"/>

          <!-- y axis marker -->
          <path d="M449 659l5 11h-3v15h-4v-15h-3z" fill="#00ff00"/>
          <text x="458" y="673" fill="#00c000" font-size="12">Y</text>
        </svg>
      </div>
    </div>
  </div>

  <!-- earthwork type dialog -->
  <div class="dlg">
    <div class="dlgcap"><span>请选择生成的土方类型</span><span class="dlgx"><svg width="13" height="13" viewBox="0 0 13 13"><path d="M2 2l9 9M11 2l-9 9" stroke="#fff" stroke-width="2.400"/></svg></span></div>
    <div class="dlgbody">
      <fieldset class="grp">
        <legend>土方类型</legend>
        <div class="rrow">
          <label class="rd"><input class="form-check-input dlgr" type="radio" name="t" checked>基坑土方</label>
          <label class="rd"><input class="form-check-input dlgr" type="radio" name="t">基槽土方</label>
          <label class="rd"><input class="form-check-input dlgr" type="radio" name="t">大开挖土方</label>
        </div>
      </fieldset>
      <fieldset class="grp">
        <legend>起始放坡位置</legend>
        <div class="rrow two">
          <label class="rd"><input class="form-check-input dlgr" type="radio" name="p" checked>垫层底</label>
          <label class="rd"><input class="form-check-input dlgr" type="radio" name="p">垫层顶</label>
        </div>
      </fieldset>
      <div class="dlgact">
        <button class="btn dlgbtn def" type="button">确定</button>
        <button class="btn dlgbtn" type="button">取消</button>
      </div>
    </div>
  </div>

  <!-- yellow callouts drawn over the screenshot -->
  <svg class="overlay" viewBox="0 0 1266 685">
    <defs><linearGradient id="fade" gradientUnits="userSpaceOnUse" x1="52" y1="553" x2="420" y2="386"><stop offset="0" stop-color="#f6f670"/><stop offset="1" stop-color="#ffff00"/></linearGradient></defs>
    <polygon points="52.200,553.500 51.800,552.500 1104,74.200 1106,78.800" fill="url(#fade)"/>
    <polygon points="1116,71 1095.500,74 1100.500,85" fill="#ffff00"/>
    <polygon points="49,556 61,544 65,552" fill="#f6f650"/>
    <path d="M1113 74L958 186" stroke="#f8f84a" stroke-width="1.200"/>
    <polygon points="951,191.500 963.400,187.200 958.600,180.800" fill="#ffff00"/>
  </svg>
</div>

<script src="https://cdn.jsdelivr.net/npm/bootstrap@5.3.2/dist/js/bootstrap.bundle.min.js"></script>
</body>
</html>
